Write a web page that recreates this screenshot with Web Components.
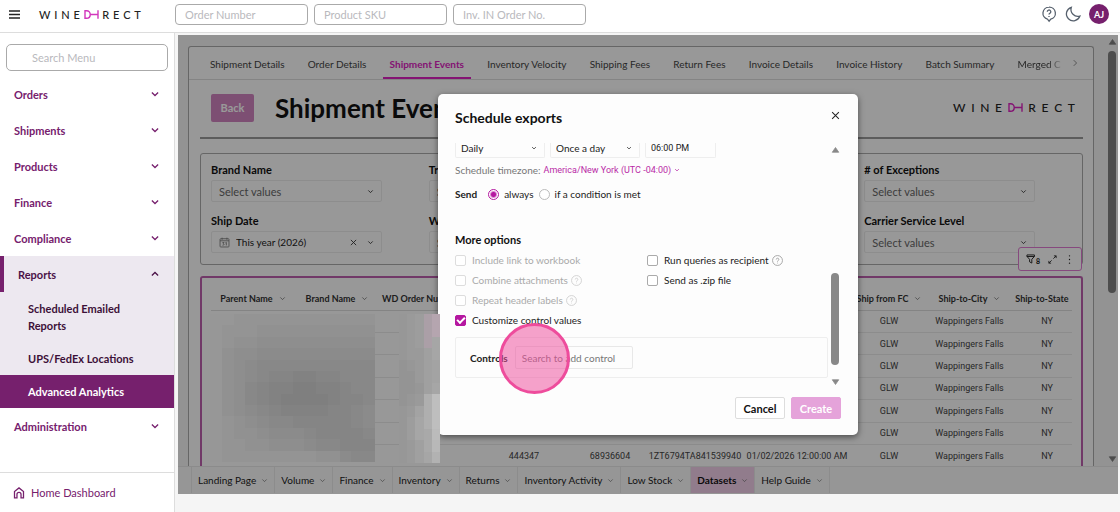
<!DOCTYPE html>
<html lang="en">
<head>
<meta charset="utf-8">
<meta name="viewport" content="width=device-width, initial-scale=1">
<title>WineDirect – Advanced Analytics</title>
<style>
  html, body { margin: 0; height: 100%; }
  body { font-family: Lato, "Open Sans", sans-serif; font-size: 11px; color: #222; background: #fff; }
</style>
</head>
<body>
<wd-app></wd-app>

<script>
const define = (name, html, setup) => {
  const template = document.createElement('template');
  template.innerHTML = '<style>*{box-sizing:border-box}button,input,select{font:inherit;color:inherit;margin:0}</style>' + html;
  customElements.define(name, class extends HTMLElement {
    connectedCallback() {
      if (this.shadowRoot) return;
      const root = this.attachShadow({ mode: 'open' });
      root.append(template.content.cloneNode(true));
      if (setup) setup(root, this);
    }
  });
};

/* Icons: one stroke style, sized by the host */
const ICONS = {
  down: '<path d="M3 5.500 8 10.500 13 5.500"/>',
  up: '<path d="M3 10.500 8 5.500l5 5"/>',
  right: '<path d="M6 3.500 10.500 8 6 12.500"/>',
  close: '<path d="M2 2l12 12M14 2 2 14"/>',
  menu: '<path d="M0 3h16M0 8h16M0 13h16"/>',
  help: '<circle cx="8" cy="8" r="7.200"/><path d="M6.200 6.500a1.900 1.900 0 1 1 2.800 1.700c-.7.400-1 .7-1 1.400M8 11.200v1"/>',
  bubble: '<path d="M8 1.200a6.100 6.100 0 0 0-1.500 12l1.600 2 1.700-2A6.100 6.100 0 0 0 8 1.200z"/><path d="M6.300 5.700a1.750 1.750 0 1 1 2.600 1.600c-.6.400-.9.700-.9 1.300M8 10v1"/>',
  moon: '<path d="M6.300 1.300A6.900 6.900 0 1 0 14.900 10 6.900 6.900 0 0 1 6.300 1.300z"/>',
  home: '<path d="M2 14.500V6L8 1.200 14 6v8.500h-3.300V9.800a2.700 2.700 0 0 0-5.400 0v4.700z"/>',
  calendar: '<rect x="1.500" y="2.500" width="13" height="12" rx="1"/><path d="M1.500 5.500h13M4.500 1v3M11.500 1v3M5 8h2.300L6 9.800c1.800 0 1.800 2.400-.9 2.200M9.300 8.600l1.400-.8v4.400"/>',
  filter: '<path d="M1.500 1.500h12v2.300L9.300 8.500v6l-3.600-2v-4L1.500 3.800zM1.500 4h12"/>',
  expand: '<path d="M9.500 6.500l5-5M10.500 1.500h4v4M6.500 9.500l-5 5M1.500 10.500v4h4"/>',
  dots: '<path d="M8 1.500h.01M8 8h.01M8 14.500h.01" stroke-linecap="round" stroke-width="2.400"/>',
  triup: '<path d="M8 3l6.500 9.500h-13z" fill="currentColor" stroke-linejoin="round"/>',
  tridown: '<path d="M8 13l6.500-9.500h-13z" fill="currentColor" stroke-linejoin="round"/>'
};
define('wd-icon', `
  <style>
    :host { display: inline-flex; flex: none; width: 10px; height: 10px; }
    svg { width: 100%; height: 100%; fill: none; stroke: currentColor; stroke-width: var(--stroke, 1.500); overflow: visible; }
  </style>
  <svg viewBox="0 0 16 16" aria-hidden="true"></svg>`,
  (root, el) => { root.querySelector('svg').innerHTML = ICONS[el.getAttribute('name')]; });

define('wd-logo', `
  <style>
    :host { display: flex; justify-content: space-between; align-items: center; color: #222; }
    svg { width: 15px; height: 9px; fill: none; stroke: var(--accent, #d236bc); stroke-width: 1.400; }
  </style>
  <span>W</span><span>I</span><span>N</span><span>E</span>
  <svg viewBox="0 0 15 9" role="img" aria-label="DI"><path d="M1 .7v7.600h1.500C7.500 8.300 7.500 .7 2.500.7zM6.200 4.500H14M14 .2v8.600"/></svg>
  <span>R</span><span>E</span><span>C</span><span>T</span>`);

define('wd-topbar', `
  <style>
    :host { display: flex; align-items: center; height: 33px; padding: 0 11px 4px 8px; border-bottom: 1px solid #ddd; background: #fff; }
    .burger { display: flex; width: 14px; padding: 0; border: 0; background: none; color: #222; }
    .burger wd-icon { width: 13px; height: 11px; --stroke: 2.200; }
    wd-logo { width: 102px; margin: 0 34px 0 17px; font-size: 11px; font-weight: 500; }
    form { display: flex; gap: 6px; flex: 1; }
    input { width: 133px; height: 21px; padding: 0 9px; border: 1px solid #aaa; border-radius: 4px; background: #fff; }
    input::placeholder { color: #b9b9bd; opacity: 1; }
    nav { display: flex; align-items: center; gap: 8px; color: #56606d; }
    nav button { display: flex; padding: 0; border: 0; background: none; color: inherit; }
    nav wd-icon { width: 16px; height: 16px; --stroke: 1.300; }
    .avatar { width: 20px; height: 20px; align-items: center; justify-content: center; border-radius: 50%; background: #76206d; color: #fff; font-size: 9px; font-weight: 700; }
  </style>
  <button class="burger" aria-label="Menu"><wd-icon name="menu"></wd-icon></button>
  <wd-logo></wd-logo>
  <form>
    <input aria-label="Order Number" placeholder="Order Number">
    <input aria-label="Product SKU" placeholder="Product SKU">
    <input aria-label="Inv. IN Order No." placeholder="Inv. IN Order No.">
  </form>
  <nav>
    <button aria-label="Help"><wd-icon name="bubble"></wd-icon></button>
    <button aria-label="Dark mode"><wd-icon name="moon"></wd-icon></button>
    <button class="avatar">AJ</button>
  </nav>`);

define('wd-nav-item', `
  <style>
    :host { display: block; }
    a { display: flex; align-items: center; justify-content: space-between; height: 36px; padding: 0 14px; color: #76206d; font-weight: 700; text-decoration: none; }
    wd-icon { --stroke: 2; }
    :host([open]) { background: #ede8f0; }
    :host([open]) a { border-left: 4px solid #76206d; color: #4b1248; }
  </style>
  <a href="#"><slot></slot></a>
  <slot name="sub"></slot>`,
  (root, el) => root.querySelector('a').insertAdjacentHTML('beforeend',
    `<wd-icon name="${el.hasAttribute('open') ? 'up' : 'down'}"></wd-icon>`));

define('wd-sidebar', `
  <style>
    :host { display: flex; flex-direction: column; width: 175px; flex: none; border-right: 1px solid #ddd; background: #fff; }
    .search { margin: 11px 6px 5px 6px; }
    .search input { width: 100%; height: 27px; padding: 0 25px; border: 1px solid #aaa; border-radius: 5px; background: #fff; }
    .search input::placeholder { color: #b9b9bd; opacity: 1; }
    nav { flex: 1; }
    .sub { display: block; padding: 8px 28px; color: #3c1038; font-weight: 700; line-height: 17px; text-decoration: none; }
    .sub.active { background: #76206d; color: #fff; }
    .home { display: flex; align-items: center; gap: 6px; height: 40px; padding: 0 13px; border-top: 1px solid #ddd; color: #76206d; text-decoration: none; }
    .home wd-icon { width: 12px; height: 12px; --stroke: 1.700; }
  </style>
  <div class="search"><input aria-label="Search Menu" placeholder="Search Menu"></div>
  <nav>
    <wd-nav-item>Orders</wd-nav-item>
    <wd-nav-item>Shipments</wd-nav-item>
    <wd-nav-item>Products</wd-nav-item>
    <wd-nav-item>Finance</wd-nav-item>
    <wd-nav-item>Compliance</wd-nav-item>
    <wd-nav-item open>Reports
      <div slot="sub">
        <a class="sub" href="#">Scheduled Emailed Reports</a>
        <a class="sub" href="#">UPS/FedEx Locations</a>
        <a class="sub active" href="#">Advanced Analytics</a>
      </div>
    </wd-nav-item>
    <wd-nav-item>Administration</wd-nav-item>
  </nav>
  <a class="home" href="#"><wd-icon name="home"></wd-icon>Home Dashboard</a>`);

/* Drop-down with its label above it; the date attribute shows the calendar variant */
define('wd-filter', `
  <style>
    :host { display: block; width: 171px; }
    label { display: block; margin-bottom: 2px; font-weight: 700; line-height: 17px; color: #111; white-space: nowrap; }
    .box { display: flex; align-items: center; gap: 6px; height: 22px; padding: 0 7px; border: 1px solid #ececec; border-radius: 2px; color: #333; }
    select { flex: 1; min-width: 0; padding: 0; border: 0; background: none; appearance: none; outline: 0; color: #666; }
    .cal { display: none; width: 11px; height: 11px; --stroke: 1.200; color: #777; }
    .clear { display: none; width: 7px; height: 7px; margin-right: 4px; --stroke: 2; }
    .arrow { width: 7px; height: 7px; --stroke: 2; }
    :host([date]) select { color: #222; font-size: 10px; }
    :host([date]) .cal, :host([date]) .clear { display: inline-flex; }
  </style>
  <label for="v"></label>
  <div class="box"><wd-icon class="cal" name="calendar"></wd-icon><select id="v"><option></option></select><wd-icon class="clear" name="close"></wd-icon><wd-icon class="arrow" name="down"></wd-icon></div>`,
  (root, el) => {
    root.querySelector('label').textContent = el.getAttribute('label');
    root.querySelector('option').textContent = el.getAttribute('value') || 'Select values';
  });

define('wd-events-table', `
  <style>
    :host { display: block; position: relative; border: 2px solid #bd5fae; border-bottom: 0; border-radius: 3px 3px 0 0; padding: 10px 9px 0; }
    table { width: 100%; border-collapse: collapse; table-layout: fixed; }
    th, td { padding: 0; text-align: center; white-space: nowrap; border-bottom: 1px solid #e9e9e9; }
    th { height: 22px; font-size: 9px; font-weight: 700; color: #333; border-color: #ddd; }
    th wd-icon { width: 7px; height: 7px; margin-left: 6px; color: #555; }
    td { height: 22px; font: 9px Roboto, sans-serif; color: #444; }
    td:last-child { padding-left: 10px; }
    tbody { height: 157px; }
    .tools { position: absolute; right: -1px; top: -31px; display: flex; align-items: center; gap: 8px; height: 24px; padding: 0 7px; border: 1px solid #e07bd2; border-radius: 3px; background: #fff; color: #222; }
    .tools button { display: flex; align-items: flex-end; padding: 0; border: 0; background: none; font-size: 7px; font-weight: 700; line-height: 8px; }
    .tools wd-icon { width: 9px; height: 9px; }
    .tools .funnel { width: 10px; height: 12px; }
  </style>
  <table>
    <colgroup></colgroup>
    <thead><tr></tr></thead><tbody></tbody>
  </table>
  <div class="tools">
    <button aria-label="Filters, 8 applied"><wd-icon class="funnel" name="filter"></wd-icon>8</button>
    <button aria-label="Expand"><wd-icon name="expand"></wd-icon></button>
    <button aria-label="More"><wd-icon name="dots"></wd-icon></button>
  </div>`,
  root => {
    const widths = [84, 84, 96, 98, 74, 96, 108, 76, 85, 60];
    root.querySelector('colgroup').innerHTML = widths.map(w => `<col style="width:${w}px">`).join('');
    const heads = ['Parent Name', 'Brand Name', 'WD Order Number', '', '', '', '', 'Ship from FC', 'Ship-to-City', 'Ship-to-State'];
    root.querySelector('thead tr').innerHTML = heads.map((h, i) =>
      `<th>${h}${h && i < 9 ? '<wd-icon name="down"></wd-icon>' : ''}</th>`).join('');
    const mid = ['', '', '', '444347', '68936604', '1ZT6794TA841539940', '01/02/2026 12:00:00 AM'];
    root.querySelector('tbody').innerHTML = Array.from({ length: 7 }, (_, r) =>
      '<tr>' + mid.map(v => `<td>${r === 6 ? v : ''}</td>`).join('') +
      '<td>GLW</td><td>Wappingers Falls</td><td>NY</td></tr>').join('');
  });

define('wd-scrollbar', `
  <style>
    :host { display: flex; flex-direction: column; align-items: center; justify-content: space-between; gap: 5px; width: 8px; color: var(--bar, #888); }
    .track { flex: 1; display: flex; flex-direction: column; width: 100%; }
    .thumb { border-radius: 4px; background: currentColor; }
    wd-icon { width: 9px; height: 8px; }
  </style>
  <wd-icon name="triup"></wd-icon><div class="track"><div class="thumb"></div></div><wd-icon name="tridown"></wd-icon>`,
  (root, el) => {
    const [before, size, after] = el.getAttribute('parts').split(' ');
    const thumb = root.querySelector('.thumb');
    thumb.style.flex = size;
    const pad = n => { const d = document.createElement('div'); d.style.flex = n; return d; };
    thumb.before(pad(before));
    thumb.after(pad(after));
  });

define('wd-report', `
  <style>
    :host { display: flex; height: 100%; overflow: hidden; background: #f6f6f6; --accent: #dc22c0; }
    .card { flex: 1; min-width: 0; margin: 11px 10px 0 10px; border: 1px solid #aaa; border-bottom: 0; border-radius: 3px 3px 0 0; background: #fdfdfd; }
    .tabs { display: flex; justify-content: space-between; align-items: stretch; height: 33px; padding: 0 13px 0 14px; border-bottom: 1px solid #ddd; font-size: 10px; }
    .tabs a { display: flex; align-items: center; padding: 3px 7px 0; border-bottom: 2px solid transparent; color: #444; text-decoration: none; white-space: nowrap; }
    .tabs a.on { color: var(--accent); font-weight: 700; border-color: var(--accent); }
    .tabs a.cut { padding-right: 0; -webkit-mask: linear-gradient(90deg, #000 75%, transparent 105%); mask: linear-gradient(90deg, #000 75%, transparent 105%); }
    .tabs wd-icon { align-self: center; color: #888; }
    .body { padding: 0 10px 0 11px; }
    header { display: flex; align-items: center; gap: 21px; height: 59px; margin-bottom: 14px; padding: 0 8px 2px 11px; border-bottom: 2px solid #999; }
    .back { height: 28px; width: 43px; padding: 0; border: 0; border-radius: 2px; background: #d084c0; color: #fff; font-weight: 700; }
    h1 { flex: 1; margin: 0; font-size: 26px; line-height: 32px; color: #111; }
    header wd-logo { width: 122px; font-size: 12px; font-weight: 500; }
    .filters { display: grid; grid-template-columns: repeat(4, 1fr); row-gap: 10px; padding: 7px 0 11px 10px; margin-bottom: 11px; border: 1px solid #aaa; border-radius: 3px; }
    .last { grid-column: 4; }
    .gutter { display: flex; width: 14px; padding: 3px 2px 3px 4px; --bar: #808080; }
  </style>
  <section class="card">
    <nav class="tabs">
      <a href="#">Shipment Details</a><a href="#">Order Details</a><a href="#" class="on">Shipment Events</a><a href="#">Inventory Velocity</a><a href="#">Shipping Fees</a><a href="#">Return Fees</a><a href="#">Invoice Details</a><a href="#">Invoice History</a><a href="#">Batch Summary</a><a href="#" class="cut">Merged C</a><wd-icon name="right"></wd-icon>
    </nav>
    <div class="body">
      <header><button class="back">Back</button><h1>Shipment Events</h1><wd-logo></wd-logo></header>
      <div class="filters">
        <wd-filter label="Brand Name"></wd-filter>
        <wd-filter label="Tracking Number"></wd-filter>
        <wd-filter class="last" label="# of Exceptions"></wd-filter>
        <wd-filter label="Ship Date" value="This year (2026)" date></wd-filter>
        <wd-filter label="WD Order Number"></wd-filter>
        <wd-filter class="last" label="Carrier Service Level"></wd-filter>
      </div>
      <wd-events-table></wd-events-table>
    </div>
  </section>
  <div class="gutter"><wd-scrollbar parts="0 243 157"></wd-scrollbar></div>`);

define('wd-pagebar', `
  <style>
    :host { display: flex; height: 28px; padding: 0 0 1px 13px; border-top: 1px solid #e8e8e8; background: #fbfbfb; color: #222; font-size: 10px; }
    a { display: flex; align-items: center; gap: 5px; padding: 0 6px; border-left: 1px solid #eaeaea; color: inherit; text-decoration: none; white-space: nowrap; }
    a:last-child { border-right: 1px solid #eaeaea; }
    a.on { background: #f2cfea; font-weight: 700; color: #111; }
    wd-icon { width: 7px; height: 7px; color: #666; }
  </style>
  <a href="#">Landing Page<wd-icon name="down"></wd-icon></a><a href="#">Volume<wd-icon name="down"></wd-icon></a><a href="#">Finance<wd-icon name="down"></wd-icon></a><a href="#">Inventory<wd-icon name="down"></wd-icon></a><a href="#">Returns<wd-icon name="down"></wd-icon></a><a href="#">Inventory Activity<wd-icon name="down"></wd-icon></a><a href="#">Low Stock<wd-icon name="down"></wd-icon></a><a href="#" class="on">Datasets<wd-icon name="down"></wd-icon></a><a href="#">Help Guide<wd-icon name="down"></wd-icon></a>`);

define('wd-check', `
  <style>
    :host { display: flex; align-items: center; height: 20px; color: #222; }
    input { appearance: none; display: grid; place-items: center; width: 11px; height: 11px; margin-right: 6px; border: 1px solid #aaa; border-radius: 2px; background: #fff; }
    input:checked { border-color: #b517a0; background: #b517a0; }
    input:checked::after { content: ""; width: 6px; height: 3px; margin-bottom: 2px; border: solid #fff; border-width: 0 0 2px 2px; transform: rotate(-45deg); }
    input:disabled { border-color: #ddd; }
    :host([disabled]) { color: #aaa; }
    wd-icon { display: none; width: 11px; height: 11px; margin-left: 3px; --stroke: 1.200; color: #999; }
    :host([help]) wd-icon { display: inline-flex; }
    :host([disabled]) wd-icon { color: #ccc; }
  </style>
  <input type="checkbox" id="c"><label for="c"><slot></slot></label><wd-icon name="help"></wd-icon>`,
  (root, el) => {
    const box = root.querySelector('input');
    box.checked = el.hasAttribute('checked');
    box.disabled = el.hasAttribute('disabled');
  });

define('wd-dialog', `
  <style>
    :host { position: relative; display: block; width: 420px; padding: 14px 17px 16px; border-radius: 5px; background: #fdfdfd; box-shadow: 0 2px 6px rgba(0,0,0,.5); color: #222; font-size: 10px; }
    header { display: flex; justify-content: space-between; height: 35px; }
    h2 { margin: 0; font-size: 14px; line-height: 20px; color: #111; }
    .close { display: flex; height: 16px; padding: 3px 1px; border: 0; background: none; }
    .close wd-icon { width: 9px; height: 9px; --stroke: 1.800; }
    .scroll { display: flex; gap: 3px; margin-right: 2px; }
    .content { flex: 1; padding-bottom: 10px; }
    wd-scrollbar { padding: 3px 0 2px; }
    .when { display: flex; gap: 5px; }
    .field { display: flex; align-items: center; width: 90px; height: 15px; padding: 0 7px 5px 5px; border: 1px solid #eee; border-top: 0; border-radius: 0 0 2px 2px; }
    .field.time { width: 71px; }
    .field select, .field input { flex: 1; min-width: 0; width: 100%; height: 15px; padding: 0; border: 0; background: none; appearance: none; outline: 0; }
    .field input { font: 9px Roboto, sans-serif; }
    .field wd-icon, .zone wd-icon { width: 6px; height: 6px; --stroke: 2; }
    .zone { display: flex; align-items: center; gap: 3px; height: 24px; color: #777; }
    .zone a { color: #b92aa6; font: 9px Roboto, sans-serif; text-decoration: none; }
    .zone wd-icon { margin-left: 1px; color: #b92aa6; }
    .send { display: flex; align-items: center; gap: 5px; height: 24px; }
    .send b { margin-right: 6px; }
    input[type=radio] { appearance: none; width: 11px; height: 11px; border: 1px solid #bbb; border-radius: 50%; background: #fff; }
    input[type=radio]:checked { border-color: #b517a0; background: radial-gradient(circle, #b517a0 2px, #fff 4px); }
    h3 { margin: 24px 0 0; font-size: 11px; line-height: 20px; color: #111; }
    .checks { display: grid; grid-template-columns: 192px 1fr; grid-template-rows: repeat(4, 20px); grid-auto-flow: column; }
    .controls { display: flex; align-items: center; gap: 7px; height: 41px; margin-top: 7px; padding-left: 14px; border: 1px solid #eee; border-radius: 2px; }
    .controls label { font-weight: 700; }
    .controls input { width: 118px; height: 23px; padding: 0 6px; border: 1px solid #e8e8e8; border-radius: 2px; background: none; }
    .controls input::placeholder { color: #777; opacity: 1; }
    footer { display: flex; justify-content: flex-end; gap: 6px; margin-top: 9px; }
    footer button { width: 50px; height: 22px; padding: 0; border: 1px solid #ddd; border-radius: 2px; background: #fff; font-size: 11px; font-weight: 700; color: #111; }
    footer .go { border-color: #e5a3da; background: #e5a3da; color: #fff; }
    .tap { position: absolute; left: 61px; top: 229px; width: 71px; height: 71px; border: 3px solid #ee4c9c; border-radius: 50%; background: rgba(238,76,156,.52); pointer-events: none; }
  </style>
  <header><h2>Schedule exports</h2><button class="close" aria-label="Close"><wd-icon name="close"></wd-icon></button></header>
  <div class="scroll">
    <div class="content">
      <div class="when">
        <div class="field"><select aria-label="Frequency"><option>Daily</option></select><wd-icon name="down"></wd-icon></div>
        <div class="field"><select aria-label="Times"><option>Once a day</option></select><wd-icon name="down"></wd-icon></div>
        <div class="field time"><input aria-label="Time" value="06:00 PM"></div>
      </div>
      <div class="zone">Schedule timezone: <a href="#">America/New York (UTC -04:00) <wd-icon name="down"></wd-icon></a></div>
      <div class="send"><b>Send</b><input type="radio" name="s" id="a" checked><label for="a">always</label><input type="radio" name="s" id="i"><label for="i">if a condition is met</label></div>
      <h3>More options</h3>
      <div class="checks">
        <wd-check disabled>Include link to workbook</wd-check>
        <wd-check disabled help>Combine attachments</wd-check>
        <wd-check disabled help>Repeat header labels</wd-check>
        <wd-check checked>Customize control values</wd-check>
        <wd-check help>Run queries as recipient</wd-check>
        <wd-check>Send as .zip file</wd-check>
      </div>
      <div class="controls"><label for="q">Controls</label><input id="q" placeholder="Search to add control"></div>
    </div>
    <wd-scrollbar parts="118 95 8"></wd-scrollbar>
  </div>
  <footer><button>Cancel</button><button class="go">Create</button></footer>
  <div class="tap"></div>`);

/* Pixelated patch over private data; each character is a shade step, rows top to bottom */
define('wd-redaction', `
  <style>
    :host { display: block; }
    svg { display: block; width: 100%; height: 100%; }
  </style>
  <svg preserveAspectRatio="none" shape-rendering="crispEdges" aria-hidden="true"></svg>`,
  (root, el) => {
    const rows = el.getAttribute('rows').split(' ');
    const svg = root.querySelector('svg');
    svg.setAttribute('viewBox', `0 0 ${rows[0].length} ${rows.length}`);
    svg.innerHTML = rows.map((row, y) => [...row].map((c, x) => {
      const v = 124 + parseInt(c, 36) * 3;
      const fill = c === 'z' ? '#b5a5af' : c === 'y' ? '#ab9fa7' : `rgb(${v},${v},${v})`;
      return `<rect x="${x}" y="${y}" width="1" height="1" fill="${fill}"/>`;
    }).join('')).join('');
  });

define('wd-frame', `
  <style>
    :host { position: relative; display: grid; grid-template-rows: 1fr auto; min-height: 0; background: #fff; }
    wd-report { min-height: 0; }
    .shade { position: absolute; inset: 0; display: grid; place-items: center; background: rgba(0,0,0,.4); }
    wd-redaction { position: absolute; top: 279px; left: 32px; width: 165px; height: 148px; }
    wd-redaction.narrow { left: 221px; width: 41px; height: 149px; }
  </style>
  <wd-report></wd-report>
  <wd-pagebar></wd-pagebar>
  <div class="shade"><wd-dialog role="dialog" aria-label="Schedule exports"></wd-dialog></div>
  <wd-redaction rows="99888888888888 98887777777777 98776666666666 97665555555555 97654444444444 97654332233444 97643221122344 97643211112334 97654322223345 98765443333345 98776555433334 98877666544333 98888888877544"></wd-redaction>
  <wd-redaction class="narrow" rows="9abyz 9abyz 9abye 9aace 89acd 88acd 889ce 89ahm 9adhm 9behm 9befl 9acfk 9acei"></wd-redaction>`);

define('wd-app', `
  <style>
    :host { display: flex; flex-direction: column; height: 100vh; }
    main { flex: 1; display: flex; min-height: 0; }
    .work { flex: 1; min-width: 0; display: grid; padding: 2px 2px 18px 3px; background: #f5f5f5; }
  </style>
  <wd-topbar></wd-topbar>
  <main><wd-sidebar></wd-sidebar><div class="work"><wd-frame></wd-frame></div></main>`);
</script>
</body>
</html>
